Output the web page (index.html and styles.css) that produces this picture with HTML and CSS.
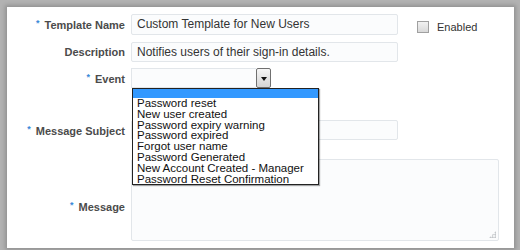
FILE: index.html
```html
<!DOCTYPE html>
<html lang="en">
<head>
    <meta charset="UTF-8">
    <title>Edit Template</title>
    <link rel="stylesheet" href="styles.css">
</head>
<body>

    <div class="card">
        <!-- Template Name -->
        <div class="row row-name">
            <label class="label"><span class="req">*</span>Template Name</label>
            <div class="field wide">Custom Template for New Users</div>
            <div class="enabled">
                <span class="checkbox"></span>
                <span>Enabled</span>
            </div>
        </div>

        <!-- Description -->
        <div class="row row-desc">
            <label class="label">Description</label>
            <div class="field wide">Notifies users of their sign-in details.</div>
        </div>

        <!-- Event select, opened -->
        <div class="row row-event">
            <label class="label"><span class="req">*</span>Event</label>
            <div class="select">
                <div class="select-box"></div>
                <div class="select-btn"><span class="arrow"></span></div>
                <ul class="options">
                    <li class="selected"></li>
                    <li>Password reset</li>
                    <li>New user created</li>
                    <li>Password expiry warning</li>
                    <li>Password expired</li>
                    <li>Forgot user name</li>
                    <li>Password Generated</li>
                    <li>New Account Created - Manager</li>
                    <li>Password Reset Confirmation</li>
                </ul>
            </div>
        </div>

        <!-- Message Subject -->
        <div class="row row-subject">
            <label class="label"><span class="req">*</span>Message Subject</label>
            <div class="field wide"></div>
        </div>

        <!-- Message -->
        <div class="row row-message">
            <label class="label"><span class="req">*</span>Message</label>
            <div class="field textarea"><span class="grip"></span></div>
        </div>
    </div>

</body>
</html>
```

FILE: styles.css
```css
/* General */
body {
    margin: 0;
    padding: 7px 6px 0 7px;
    height: 250px;
    box-sizing: border-box;
    overflow: hidden;
    background-color: #b2b2b2;
    font-family: "Liberation Sans", Arial, sans-serif;
    color: #333;
}

.card {
    height: 241px;
    background-color: #fff;
    box-shadow: 0 0 4px 2px rgba(0, 0, 0, 0.18);
}

/* Form rows */
.row {
    display: flex;
    align-items: center;
}

.row-name { padding-top: 7px; height: 21px; }
.row-desc { margin-top: 7px; height: 20px; }
.row-event { margin-top: 6px; height: 20px; }
.row-subject { margin-top: 32px; height: 20px; }
.row-message { margin-top: 19px; height: 82px; }

.label {
    width: 124px;
    box-sizing: border-box;
    padding-right: 6px;
    text-align: right;
    font-size: 11px;
    font-weight: bold;
    color: #4b4b4b;
}

.row-message .label {
    padding-top: 13px;
}

.req {
    color: #3a8ad8;
    font-size: 9px;
    margin-right: 5px;
    vertical-align: 3px;
}

/* Inputs */
.field {
    height: 100%;
    box-sizing: border-box;
    border: 1px solid #e2e6ea;
    border-radius: 2px;
    background-color: #fbfcfd;
    padding-left: 5px;
    font-size: 12px;
    line-height: 19px;
    color: #333;
}

.wide {
    width: 267px;
}

.textarea {
    width: 368px;
    position: relative;
}

.grip {
    position: absolute;
    right: 2px;
    bottom: 2px;
    width: 7px;
    height: 7px;
    background-image: radial-gradient(circle, #b8bcc0 0.8px, transparent 1px);
    background-size: 2.5px 2.5px;
    clip-path: polygon(100% 0, 100% 100%, 0 100%);
}

/* Enabled checkbox */
.enabled {
    display: flex;
    align-items: center;
    margin-left: 19px;
    padding-top: 5px;
    font-size: 11px;
    color: #333;
}

.checkbox {
    width: 10px;
    height: 10px;
    border: 1px solid #a0a0a0;
    background: linear-gradient(#f2f2f2, #d9d9d9);
    margin-right: 8px;
}

/* Select (open) */
.select {
    position: relative;
    display: flex;
    width: 140px;
    height: 100%;
}

.select-box {
    flex: 1;
    border: 1px solid #e2e6ea;
    border-right: none;
    background-color: #fbfcfd;
}

.select-btn {
    width: 15px;
    box-sizing: border-box;
    border: 1px solid #707070;
    border-radius: 2px;
    background: linear-gradient(#f6f6f6, #d4d4d4);
    display: flex;
    align-items: center;
    justify-content: center;
}

.arrow {
    width: 0;
    height: 0;
    border-left: 3px solid transparent;
    border-right: 3px solid transparent;
    border-top: 4px solid #111;
    margin-top: 1px;
}

.options {
    position: absolute;
    top: 20px;
    left: 1px;
    width: 187px;
    box-sizing: border-box;
    margin: 0;
    padding: 0;
    list-style: none;
    background-color: #fff;
    border: 1px solid #222;
    box-shadow: 1px 1px 1px rgba(0, 0, 0, 0.35);
    font-size: 11.5px;
    line-height: 11px;
    color: #111;
    z-index: 10;
}

.options li {
    padding-left: 4px;
    height: 10.8px;
    white-space: nowrap;
}

.options li.selected {
    height: 9px;
    background-color: #3399ff;
}
```
